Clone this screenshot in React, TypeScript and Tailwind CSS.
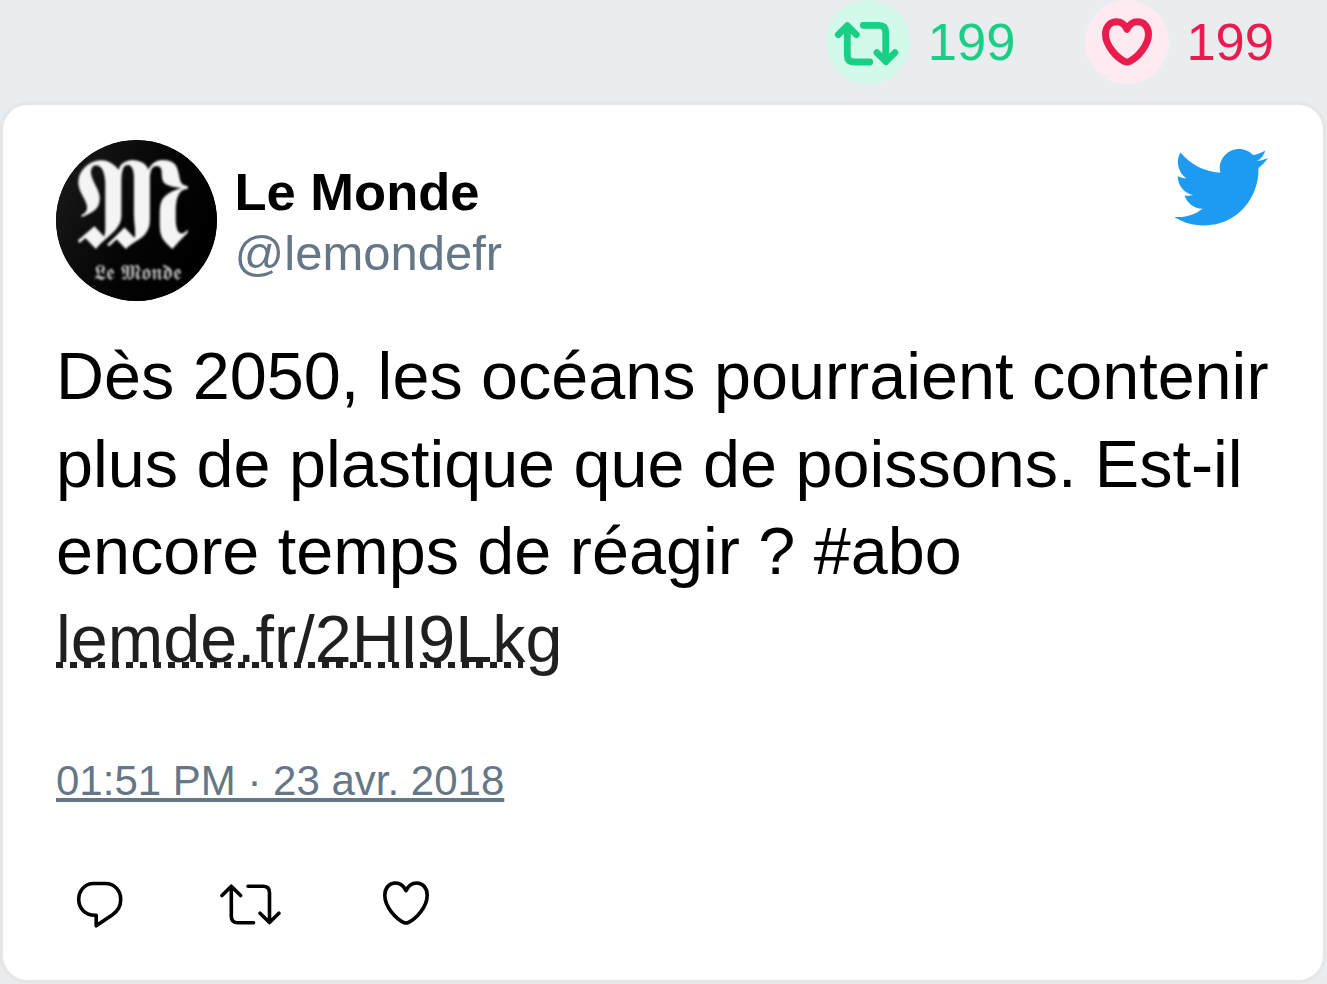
const RETWEET_D =
  'M2.200 12.200 11.500 2.900l9.300 9.300M11.500 3.200V33q0 6.500 6.500 6.500h15.700M28.200 2.900H43.200q6.500 0 6.500 6.500V39.200M40.300 29.900l9.400 9.400 9.400-9.400';

function Bird() {
  return (
    <svg className="mt-[9px] h-[76.5px] w-[94px] shrink-0" viewBox="0.937 2.752 22.706 18.454" preserveAspectRatio="none" fill="#1d9bf0">
      <path d="M23.643 4.937c-.835.37-1.732.62-2.675.733.962-.576 1.7-1.49 2.048-2.578-.9.534-1.897.922-2.958 1.13-.85-.904-2.06-1.47-3.4-1.47-2.572 0-4.658 2.086-4.658 4.66 0 .364.042.718.12 1.06-3.873-.195-7.304-2.05-9.602-4.868-.4.69-.63 1.49-.63 2.342 0 1.616.823 3.043 2.072 3.878-.764-.025-1.482-.234-2.11-.583v.06c0 2.257 1.605 4.14 3.737 4.568-.392.106-.803.162-1.227.162-.3 0-.593-.028-.877-.082.593 1.85 2.313 3.198 4.352 3.234-1.595 1.25-3.604 1.995-5.786 1.995-.376 0-.747-.022-1.112-.065 2.062 1.323 4.51 2.093 7.14 2.093 8.57 0 13.255-7.098 13.255-13.254 0-.2-.005-.402-.014-.602.91-.658 1.7-1.477 2.323-2.41z" />
    </svg>
  );
}

function Avatar() {
  return (
    <svg className="size-[161px] shrink-0 rounded-full bg-black" viewBox="0 0 161 161">
      <defs>
        <linearGradient id="sheen" x1="0" y1="0" x2="1" y2="0.5">
          <stop offset="0" stopColor="#1c1c1c" />
          <stop offset="0.6" stopColor="#050505" />
          <stop offset="1" stopColor="#000" />
        </linearGradient>
        <filter id="soften">
          <feGaussianBlur stdDeviation="0.8" />
        </filter>
      </defs>
      <circle cx="80.5" cy="80.5" r="80.5" fill="url(#sheen)" />
      <g filter="url(#soften)" className="font-['DejaVu_Sans','DejaVu_Serif',serif]">
        <text transform="translate(77 107) scale(1.1 1.13)" textAnchor="middle" fontSize="112" fill="#f4f4f4">𝕸</text>
        <text x="82" y="140" textAnchor="middle" fontSize="21.500" fill="#b4b4b4">𝕷𝖊 𝕸𝖔𝖓𝖉𝖊</text>
      </g>
    </svg>
  );
}

export default function App() {
  return (
    <div className="flex h-[984px] w-[1327px] flex-col overflow-hidden bg-[#e9edf0] font-['Liberation_Sans',Arial,sans-serif] text-black">
      <div className="flex h-[105px] shrink-0 items-start justify-end gap-[70px] pr-[53px] text-[52.5px] leading-[84px]">
        <div className="flex gap-[17.5px] text-[#19cf86]">
          <svg className="size-[84px]" viewBox="826 0 84 84" fill="none">
            <circle cx="868" cy="42" r="42" fill="#d3f9ea" />
            <path d="M838.3 34.7l9-9 9 9M847.3 26.5V55.3q0 6.7 6.7 6.7H869.7M863.3 25.3H878.7q7 0 7 7V61M876.9 52.7l9 9 9-9" stroke="#19cf86" strokeWidth="6.8" strokeLinecap="round" strokeLinejoin="round" />
          </svg>
          <span>199</span>
        </div>
        <div className="flex gap-[17px] text-[#e81c4f]">
          <svg className="size-[84px]" viewBox="1085 0 84 84" fill="none">
            <circle cx="1127" cy="42" r="42" fill="#fdebf1" />
            <path d="M1127 29.3C1124.5 24 1120.5 21.8 1116.5 21.8C1110 21.8 1105.5 27 1105.5 34C1105.5 46 1117 57.5 1124.3 61.4Q1127 62.8 1129.700 61.4C1137 57.500 1148.500 46 1148.500 34C1148.500 27 1144 21.800 1137.500 21.800C1133.500 21.800 1129.500 24 1127 29.300Z" stroke="#e81c4f" strokeWidth="7" strokeLinejoin="round" />
          </svg>
          <span>199</span>
        </div>
      </div>

      <article className="mr-[4px] ml-[3px] flex h-[875px] shrink-0 flex-col rounded-[24.5px] bg-white pt-[35px] pr-[55px] pl-[53px] shadow-[0_0_0_3.5px_#e6e6e6]">
        <header className="flex h-[161px] items-start">
          <Avatar />
          <div className="ml-[17.5px] flex grow flex-col pt-[20px]">
            <div className="text-[52.5px] leading-[63px] font-bold">Le Monde</div>
            <div className="text-[49px] leading-[60px] text-[#657786]">@lemondefr</div>
          </div>
          <Bird />
        </header>

        <p className="mt-[32px] text-[66.500px] leading-[87.500px] whitespace-nowrap">
          Dès 2050, les océans pourraient contenir<br />
          plus de plastique que de poissons. Est-il<br />
          encore temps de réagir ? #abo<br />
          <a className="relative text-[#1f1f1f]">
            lemde.fr/2HI9Lkg
            <span className="absolute top-[60px] left-0 h-[6.500px] w-[467px] bg-[repeating-linear-gradient(90deg,#1f1f1f_0_7px,transparent_7px_14px)]" />
          </a>
        </p>

        <time className="mt-[69.5px] text-[42px] leading-[56px] text-[#657786]">
          <span className="underline decoration-[3.500px] underline-offset-[3px] [text-decoration-skip-ink:none]">01:51 PM · 23 avr. 2018</span>
        </time>

        <div className="mt-[72px] flex pl-[19px]">
          <svg className="h-[48px] w-[48px]" viewBox="75 881 48 48" fill="none" stroke="#000" strokeWidth="3.600">
            <path d="M93.500 883.500H105.500C114.300 883.500 120.700 890.500 120.700 899.500C120.700 906 117.500 911.300 112.500 914.700L96.200 925.800V915.300H94.500C85.500 915.300 78.700 908.300 78.700 899.500C78.700 890.500 85 883.500 93.500 883.500Z" strokeLinejoin="round" />
          </svg>
          <svg className="ml-[97px] h-[48px] w-[62px]" viewBox="0.200 -2.300 62 48" fill="none" stroke="#000" strokeWidth="3.600" strokeLinecap="round" strokeLinejoin="round">
            <path d={RETWEET_D} />
          </svg>
          <svg className="ml-[100px] h-[48px] w-[50px]" viewBox="382 881 50 48" fill="none" stroke="#000" strokeWidth="3.600" strokeLinejoin="round">
            <path d="M406 890.700C403.500 885.200 399.500 883 395.500 883C389 883 384.800 888.200 384.800 895.200C384.800 907.500 396.500 918.700 403.400 922.300Q406 923.700 408.600 922.300C415.500 918.700 427.200 907.500 427.200 895.200C427.200 888.200 423 883 416.500 883C412.500 883 408.500 885.200 406 890.700Z" />
          </svg>
        </div>
      </article>
    </div>
  );
}
